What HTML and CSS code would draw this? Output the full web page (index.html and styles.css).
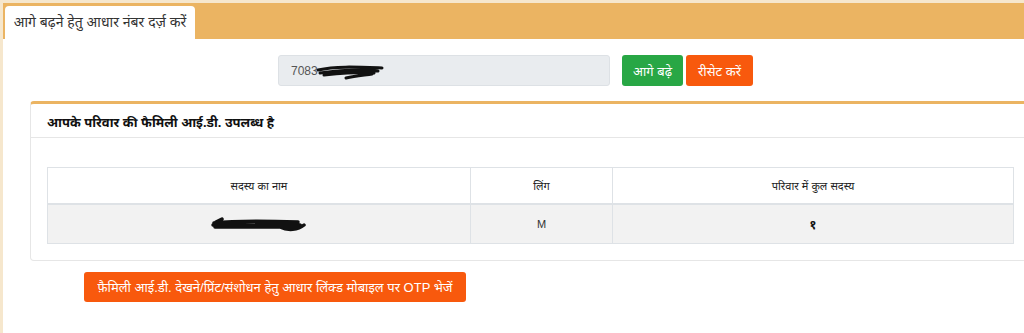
FILE: index.html
```html
<!DOCTYPE html>
<html lang="hi">
	<head>
		<meta charset="UTF-8" />
		<meta name="viewport" content="width=device-width, initial-scale=1.0" />
		<title>फैमिली आई.डी.</title>
		<link rel="stylesheet" href="styles.css">
	</head>
	<body>
		<div class="panel">
			<!-- Tabs [start] -->
			<div class="tab-bar">
				<div class="tab">आगे बढ़ने हेतु आधार नंबर दर्ज़ करें</div>
			</div>
			<!-- Tabs [end  ] -->

			<!-- Aadhaar form -->
			<div class="search-row">
				<div class="aadhaar-input">
					<span>7083</span>
					<svg class="scribble" width="70" height="16" viewBox="0 0 70 16">
						<path d="M2 6 C20 2 40 3 66 4 M4 9 C25 6 45 5 62 7 M8 11 C30 9 48 8 58 9 M30 14 C40 12 50 11 56 10" stroke="#111" stroke-width="3" fill="none" stroke-linecap="round" />
					</svg>
				</div>
				<button class="btn btn-green">आगे बढ़े</button>
				<button class="btn btn-orange">रीसेट करें</button>
			</div>

			<!-- Result card -->
			<div class="card">
				<div class="card-header">आपके परिवार की फैमिली आई.डी. उपलब्ध है</div>
				<div class="card-body">
					<table class="tb_style">
						<thead>
							<tr>
								<th class="col-name">सदस्य का नाम</th>
								<th class="col-gender">लिंग</th>
								<th>परिवार में कुल सदस्य</th>
							</tr>
						</thead>
						<tbody>
							<tr>
								<td>
									<svg class="scribble" width="98" height="16" viewBox="0 0 98 16">
										<path d="M4 7 C30 4 60 5 88 6 M3 9 C30 8 60 8 90 9 M5 11 C30 11 60 11 86 11 M6 6 L12 3 M70 11 C78 15 88 14 94 9" stroke="#111" stroke-width="3.5" fill="none" stroke-linecap="round" />
									</svg>
								</td>
								<td>M</td>
								<td class="count">१</td>
							</tr>
						</tbody>
					</table>
				</div>
			</div>

			<button class="btn btn-orange btn-otp">फ़ैमिली आई.डी. देखने/प्रिंट/संशोधन हेतु आधार लिंक्ड मोबाइल पर OTP भेजें</button>
		</div>
	</body>
</html>
```

FILE: styles.css
```css
/* Base styles */
body {
	font-family: "Liberation Sans", "Noto Sans", sans-serif;
	margin: 0px;
	padding: 0px;
	background: #fff;
	color: #212529;
	overflow-x: hidden;
}
.panel {
	border-top: 3px solid #f6e7cd;
	border-left: 3px solid #f6e7cd;
	min-height: 330px;
}
/* Tab bar */
.tab-bar {
	background: #ebb462;
	padding: 3px 0 0 2px;
	display: flex;
}
.tab {
	background: #fff;
	width: 190px;
	height: 33px;
	box-sizing: border-box;
	padding-top: 6px;
	text-align: center;
	font-size: 14px;
	color: #333;
	border-radius: 4px 4px 0 0;
}
/* Search row */
.search-row {
	display: flex;
	justify-content: center;
	align-items: center;
	padding: 16px 0 0 4px;
}
.aadhaar-input {
	width: 332px;
	height: 31px;
	box-sizing: border-box;
	background: #e9ecef;
	border: 1px solid #dde1e5;
	border-radius: 3px;
	padding-left: 12px;
	display: flex;
	align-items: center;
	font-size: 12px;
	color: #555;
	margin-right: 12px;
}
.aadhaar-input .scribble {
	margin-left: -2px;
	margin-top: 2px;
}
.btn {
	border: none;
	border-radius: 3px;
	color: #fff;
	font-family: inherit;
	font-size: 13px;
	height: 31px;
	padding: 0 9px;
	cursor: pointer;
}
.btn-green {
	background: #28a745;
	width: 61px;
	margin-right: 3px;
}
.btn-orange {
	background: #f8590d;
}
.search-row .btn-orange {
	width: 67px;
}
/* Card */
.card {
	margin: 15px -8px 0 27px;
	border: 1px solid #e6e6e6;
	border-top: 3px solid #ebb462;
	border-radius: 4px;
}
.card-header {
	height: 34px;
	box-sizing: border-box;
	padding: 9px 16px 0 16px;
	font-size: 13px;
	font-weight: bold;
	color: #111;
	border-bottom: 1px solid #e6e6e6;
}
.card-body {
	padding: 29px 17px 16px 16px;
}
/* Table */
.tb_style {
	table-layout: fixed;
	width: 967px;
	border-collapse: collapse;
	font-size: 11px;
}
.tb_style th,
.tb_style td {
	border: 1px solid #dee2e6;
	text-align: center;
	vertical-align: middle;
	padding: 0;
}
.tb_style th {
	height: 35px;
	font-weight: normal;
	color: #222;
	border-bottom: 2px solid #dee2e6;
}
.tb_style td {
	height: 38px;
	background: #f2f2f2;
	color: #333;
}
.tb_style .col-name {
	width: 422px;
}
.tb_style .col-gender {
	width: 141px;
}
.tb_style .scribble {
	vertical-align: middle;
}
.tb_style .count {
	font-weight: bold;
	font-size: 13px;
	color: #111;
}
/* OTP button */
.btn-otp {
	display: block;
	margin: 11px 0 0 81px;
	height: 30px;
	width: 382px;
	padding: 0;
}
```
